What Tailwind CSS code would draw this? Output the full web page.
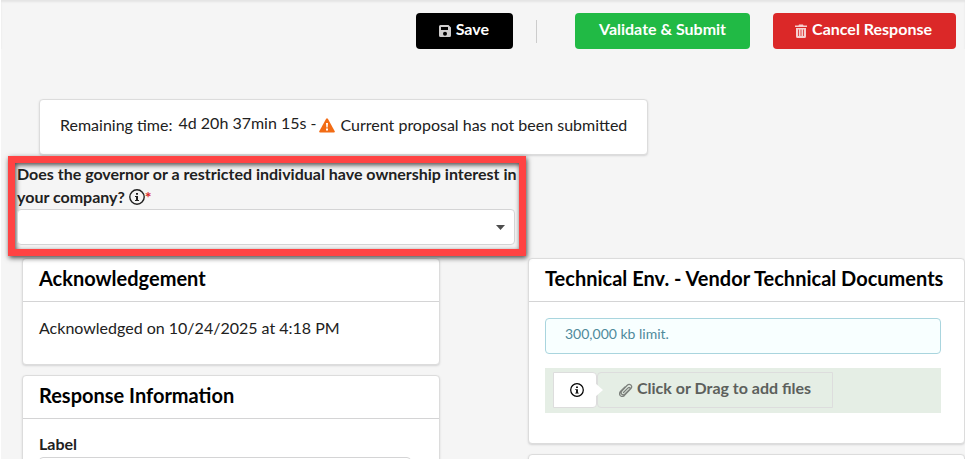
<!DOCTYPE html>
<html lang="en">
<head>
    <meta charset="UTF-8">
    <meta name="viewport" content="width=device-width, initial-scale=1.0">
    <title>Proposal Response</title>
    <script src="https://cdn.jsdelivr.net/npm/@tailwindcss/browser@4"></script>
</head>
<body class="h-screen overflow-hidden border-l border-white bg-[#f5f5f5] font-['Lato',sans-serif] text-base text-[#212121]">

    <!-- Action bar -->
    <header class="flex items-center justify-end pt-[13px] pr-[9px] shadow-[inset_0_2px_2px_#e4e4e4]">
        <button type="button" class="flex h-9 items-center gap-1 rounded bg-black pr-6 pb-1 pl-[22px] font-bold text-white">
            <svg class="mt-1 size-[14px] text-[#cfcdcd]" viewBox="0 0 14 14" fill="currentColor" aria-hidden="true">
                <path fill-rule="evenodd" d="M2.5 1h8L13 3.500V11.500Q13 13 11.500 13h-9Q1 13 1 11.500v-9Q1 1 2.500 1ZM3 3v3h7V3ZM7 7.700a2 2 0 1 0 0 4 2 2 0 1 0 0-4Z"/>
            </svg>
            Save
        </button>
        <div class="mr-[38px] ml-[23px] h-[23px] w-px bg-[#cccccc]"></div>
        <button type="button" class="mr-[23px] h-9 rounded bg-[#21ba45] px-6 pb-1 font-bold text-white">Validate &amp; Submit</button>
        <button type="button" class="flex h-9 items-center gap-1 rounded bg-[#db2828] pr-6 pb-1 pl-[21px] font-bold text-white">
            <svg class="mt-1 size-[14px] text-[#f6cfcf]" viewBox="0 0 14 14" fill="currentColor" aria-hidden="true">
                <path d="M1 1.500h3.500L5 .5h4l.5 1H13V3H1Z"/>
                <path fill-rule="evenodd" d="M2 4h10v8.500Q12 14 10.500 14h-7Q2 14 2 12.500ZM4 5.500v6.500h.8V5.500ZM6.600 5.500v6.500h.8V5.500ZM9.200 5.500v6.500h.8V5.500Z"/>
            </svg>
            Cancel Response
        </button>
    </header>

    <main>
        <!-- Remaining time -->
        <section class="mt-[50px] ml-[38px] flex h-14 w-fit items-center rounded border border-[#dcdcdc] bg-white px-5 pb-1 shadow-[0_1px_2px_#d4d4d5]">
            <span>Remaining time:</span>
            <span class="mb-1 ml-[6px]">4d 20h 37min 15s -</span>
            <svg class="mr-[6px] ml-[2px] h-[15px] w-4" viewBox="0 0 16 15" aria-hidden="true">
                <path fill="#f26c15" d="M7 1q1-1.600 2 0l6.600 12q.8 1.500-.8 1.500H1.200q-1.600 0-.8-1.500Z"/>
                <path fill="#fff" d="M7 5h2l-.4 4.500H7.400ZM7 10.500h2v2H7Z"/>
            </svg>
            <span>Current proposal has not been submitted</span>
        </section>

        <!-- Ownership question -->
        <section class="relative mt-px ml-[7px] w-[518px] max-w-full border-7 border-[#ff4343] pb-1 pl-[2px] shadow-[1px_2px_5px_rgba(0,0,0,0.7),inset_1px_2px_5px_rgba(0,0,0,0.7)]">
            <label for="ownership" class="-mt-px mb-px block leading-[23px] font-bold">
                Does the governor or a restricted individual have ownership interest in your company?
                <svg class="inline size-4 align-[-2px]" viewBox="0 0 16 16" aria-hidden="true">
                    <circle cx="8" cy="8" r="7.200" fill="none" stroke="currentColor" stroke-width="1.400"/>
                    <path fill="currentColor" d="M7 4h2v1.800H7ZM6 7h3v4h1v1H6v-1h1V8H6Z"/>
                </svg><span class="text-[#db2828]">*</span>
            </label>
            <div class="relative mr-1">
                <select id="ownership" class="block h-9 w-full appearance-none rounded border border-[#d4d4d5] bg-white px-3">
                    <option></option>
                </select>
                <svg class="pointer-events-none absolute top-4 right-[10px] h-[5px] w-[9px]" viewBox="0 0 9 5" aria-hidden="true">
                    <path fill="#4d4d4d" d="M0 0h9L4.500 5Z"/>
                </svg>
            </div>
        </section>

        <div class="mt-[2px] ml-[21px] grid grid-cols-[418fr_437fr] items-start gap-[88px]">
            <div class="grid gap-[10px]">
                <section class="rounded border border-[#dcdcdc] bg-white shadow-[0_1px_2px_#d4d4d5]">
                    <h2 class="h-[43px] border-b border-[#d4d4d5] px-4 pt-[5px] text-xl font-bold text-black">Acknowledgement</h2>
                    <p class="px-4 pt-[14px] pb-6">Acknowledged on 10/24/2025 at 4:18 PM</p>
                </section>
                <section class="rounded border border-[#dcdcdc] bg-white shadow-[0_1px_2px_#d4d4d5]">
                    <h2 class="h-[43px] border-b border-[#d4d4d5] px-4 pt-[5px] text-xl font-bold text-black">Response Information</h2>
                    <div class="pt-[13px] pr-7 pb-6 pl-4">
                        <label for="label" class="mb-px block font-bold">Label</label>
                        <input id="label" type="text" class="block h-9 w-full rounded border border-[#d4d4d5] px-3">
                    </div>
                </section>
            </div>

            <div class="grid gap-[10px]">
                <section class="rounded border border-[#dcdcdc] bg-white shadow-[0_1px_2px_#d4d4d5]">
                    <h2 class="h-[43px] border-b border-[#d4d4d5] px-4 pt-[5px] text-xl font-bold whitespace-nowrap text-black">Technical Env. - Vendor Technical Documents</h2>
                    <div class="pt-4 pr-[23px] pb-[30px] pl-4">
                        <p class="mb-[14px] h-9 rounded border border-[#a9d5de] bg-[#f8ffff] px-[19px] pt-[5px] text-sm text-[#4f8a9b]">300,000 kb limit.</p>
                        <div class="flex h-[45px] bg-[#e5eee5] pt-1 pl-2">
                            <button type="button" aria-label="File information" class="relative flex h-9 w-11 items-center justify-center rounded-r border border-[#dddddd] bg-white">
                                <svg class="ml-1 size-[14px] text-black" viewBox="0 0 16 16" aria-hidden="true">
                                    <circle cx="8" cy="8" r="7.200" fill="none" stroke="currentColor" stroke-width="1.400"/>
                                    <path fill="currentColor" d="M7 4h2v1.800H7ZM6 7h3v4h1v1H6v-1h1V8H6Z"/>
                                </svg>
                                <svg class="absolute top-[10px] -right-[7px] h-[14px] w-[8px]" viewBox="0 0 8 14" aria-hidden="true">
                                    <path fill="#fff" d="M0 0l8 7-8 7Z"/>
                                </svg>
                            </button>
                            <button type="button" class="flex h-9 items-center gap-1 rounded-l border border-[#dddddd] pr-[21px] pb-1 pl-[21px] font-bold text-[#5c605c]">
                                <svg class="mt-1 size-[14px]" viewBox="0 0 14 14" fill="none" stroke="#7c807c" stroke-width="1.300" stroke-linecap="round" aria-hidden="true">
                                    <path d="M4.500 9.500l4.600-4.600q1-.9 1.700-.2t-.2 1.700L6 11q-1.700 1.500-3.200.2t.2-3.300L8 2.500q2-2 3.800-.6 1.800 1.900-.1 3.900L5.500 12.400q-2.400 2-4.200.2-1.600-2 .4-4.300L6 4"/>
                                </svg>
                                Click or Drag to add files
                            </button>
                        </div>
                    </div>
                </section>
                <section class="h-20 rounded border border-[#dcdcdc] bg-white shadow-[0_1px_2px_#d4d4d5]"></section>
            </div>
        </div>
    </main>
</body>
</html>
